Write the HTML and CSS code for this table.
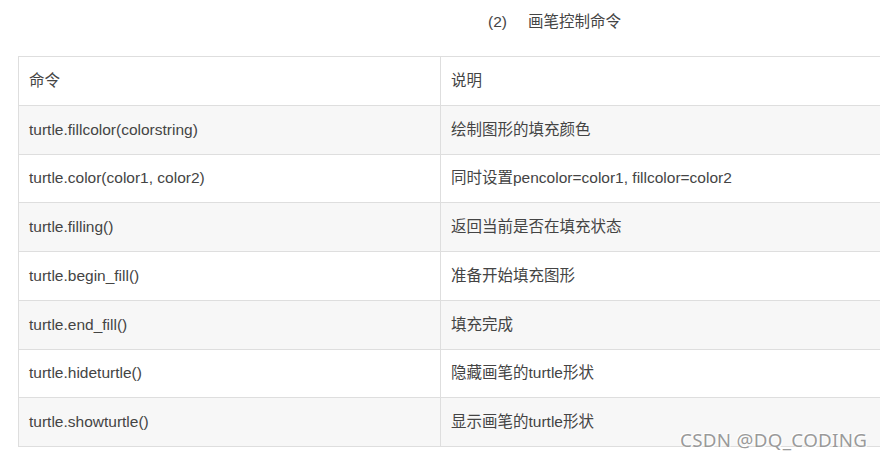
FILE: index.html
```html
<!DOCTYPE html>
<html lang="zh">
<head>
<meta charset="utf-8">
<link rel="stylesheet" href="styles.css">
</head>
<body>
<div class="page">
  <p class="caption"><span class="num">(2)</span><span class="title">画笔控制命令</span></p>
  <table class="cmds">
    <colgroup><col class="c1"><col class="c2"></colgroup>
    <tbody>
      <tr><td>命令</td><td>说明</td></tr>
      <tr><td>turtle.fillcolor(colorstring)</td><td>绘制图形的填充颜色</td></tr>
      <tr><td>turtle.color(color1, color2)</td><td>同时设置pencolor=color1, fillcolor=color2</td></tr>
      <tr><td>turtle.filling()</td><td>返回当前是否在填充状态</td></tr>
      <tr><td>turtle.begin_fill()</td><td>准备开始填充图形</td></tr>
      <tr><td>turtle.end_fill()</td><td>填充完成</td></tr>
      <tr><td>turtle.hideturtle()</td><td>隐藏画笔的turtle形状</td></tr>
      <tr><td>turtle.showturtle()</td><td>显示画笔的turtle形状</td></tr>
    </tbody>
  </table>
  <div class="watermark">CSDN @DQ_CODING</div>
</div>
</body>
</html>
```
FILE: styles.css
```css
html, body {
  margin: 0;
  padding: 0;
  overflow: hidden;
  background: #fff;
}
.page {
  position: relative;
  width: 880px;
  height: 463px;
  overflow: hidden;
  font-family: "Liberation Sans", Arial, "Noto Sans CJK SC", sans-serif;
  color: #444;
  font-size: 15.5px;
}
.caption {
  margin: 0;
  padding: 11px 0 0 488px;
  height: 56px;
  box-sizing: border-box;
  line-height: 22px;
  white-space: nowrap;
}
.num {
  display: inline-block;
  width: 40px;
}
.cmds {
  margin-left: 18px;
  width: 900px;
  border-collapse: collapse;
  table-layout: fixed;
}
.c1 { width: 422px; }
.cmds td {
  border: 1px solid #dedede;
  height: 48.75px;
  padding: 0 10px;
  box-sizing: border-box;
  line-height: 22px;
  vertical-align: middle;
  white-space: nowrap;
}
.cmds tr:nth-child(even) td {
  background: #f7f7f7;
}
.watermark {
  position: absolute;
  left: 680px;
  top: 428px;
  font-family: "Noto Sans", "DejaVu Sans", sans-serif;
  font-size: 18.8px;
  line-height: 24px;
  color: #9a9a9a;
  letter-spacing: 0.3px;
  text-shadow: 0 0 1px #fff, 1px 1px 0 #fff, -1px -1px 0 #fff;
}
```
